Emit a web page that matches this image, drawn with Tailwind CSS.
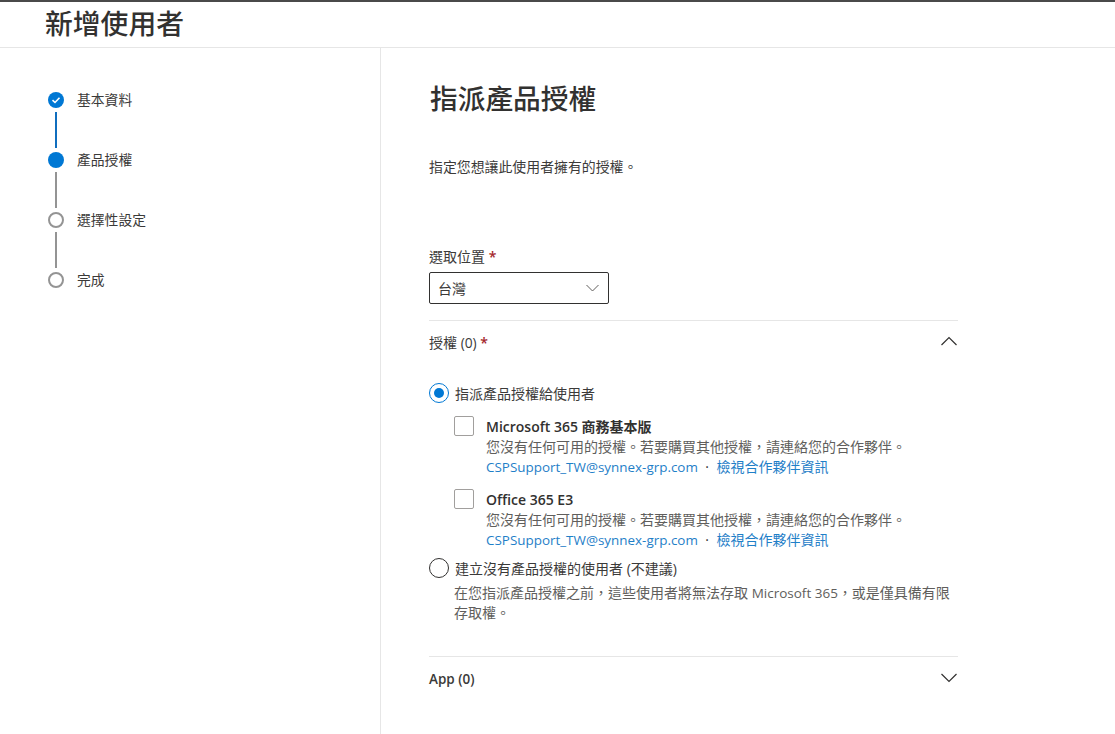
<!DOCTYPE html>
<html lang="zh-TW">
<head>
    <meta charset="UTF-8">
    <title>新增使用者</title>
    <script src="https://cdn.jsdelivr.net/npm/@tailwindcss/browser@4"></script>
</head>
<body class="bg-white h-[734px] overflow-hidden font-['Open_Sans','Noto_Sans_CJK_TC',sans-serif] text-[#3b3a39]">
    <!-- Header -->
    <div class="h-[48px] border-t-2 border-t-[#4a4a4a] border-b border-b-[#e6e6e6] pl-[45px]">
        <h1 class="text-[27.8px] leading-[42px] font-medium text-[#323130]">新增使用者</h1>
    </div>

    <div class="flex h-[686px]">
        <!-- Steps -->
        <div class="w-[381px] border-r border-[#e6e6e6] pt-[44px] pl-[48px] text-[13.8px]">
            <div class="flex items-center gap-[13px] h-[16px]">
                <div class="w-[16px] h-[16px] rounded-full bg-[#0078d4] flex items-center justify-center">
                    <svg width="10" height="10" viewBox="0 0 10 10" fill="none"><path d="M1.5 5.2 L4 7.5 L8.5 2.8" stroke="white" stroke-width="1.6"/></svg>
                </div>
                <span class="leading-none">基本資料</span>
            </div>
            <div class="w-[2px] h-[36px] bg-[#106ebe] ml-[7px] mt-[4px]"></div>
            <div class="flex items-center gap-[13px] h-[16px] mt-[4px]">
                <div class="w-[16px] h-[16px] rounded-full bg-[#0078d4]"></div>
                <span class="leading-none">產品授權</span>
            </div>
            <div class="w-[2px] h-[36px] bg-[#949494] ml-[7px] mt-[4px]"></div>
            <div class="flex items-center gap-[13px] h-[16px] mt-[4px]">
                <div class="w-[16px] h-[16px] rounded-full border-2 border-[#949494]"></div>
                <span class="leading-none">選擇性設定</span>
            </div>
            <div class="w-[2px] h-[36px] bg-[#949494] ml-[7px] mt-[4px]"></div>
            <div class="flex items-center gap-[13px] h-[16px] mt-[4px]">
                <div class="w-[16px] h-[16px] rounded-full border-2 border-[#949494]"></div>
                <span class="leading-none">完成</span>
            </div>
        </div>

        <!-- Main -->
        <div class="w-[577px] pl-[48px]">
            <h2 class="text-[27.7px] leading-[40px] font-medium mt-[30px] ml-[1px] text-[#323130]">指派產品授權</h2>
            <p class="text-[13.9px] leading-[20px] mt-[39px]">指定您想讓此使用者擁有的授權。</p>

            <div class="mt-[70px] text-[14px] leading-[20px]">選取位置 <span class="text-[#a4262c] font-semibold">*</span></div>
            <div class="mt-[5px] w-[180px] h-[32px] border border-[#323130] rounded-[2px] flex items-center justify-between pl-[8px] pr-[9px] text-[14px]">
                <span>台灣</span>
                <svg width="13" height="8" viewBox="0 0 13 8" fill="none"><path d="M0.5 1 L6.5 7 L12.5 1" stroke="#605e5c" stroke-width="1"/></svg>
            </div>

            <!-- Licenses section -->
            <div class="mt-[16px] border-t border-[#e6e6e6] h-[336px]">
                <div class="flex items-center justify-between h-[43px]">
                    <span class="text-[14px]">授權 <span class="text-[13.8px] font-medium">(0)</span> <span class="text-[#a4262c] font-semibold">*</span></span>
                    <svg width="16" height="10" viewBox="0 0 16 10" fill="none" class="mb-[3px] mr-[1px]"><path d="M0.5 9 L8 1.5 L15.5 9" stroke="#323130" stroke-width="1.2"/></svg>
                </div>

                <div class="flex items-center gap-[6px] mt-[18px] h-[22px]">
                    <div class="w-[20px] h-[20px] rounded-full border border-[#0078d4] flex items-center justify-center">
                        <div class="w-[10px] h-[10px] rounded-full bg-[#0078d4]"></div>
                    </div>
                    <span class="text-[14px]">指派產品授權給使用者</span>
                </div>

                <div class="flex mt-[12px] pl-[25px] gap-[12px]">
                    <div class="w-[20px] h-[20px] border border-[#a19f9d] rounded-[2px] shrink-0"></div>
                    <div class="text-[14px] leading-[20px] pt-[1px]">
                        <div class="font-semibold text-[#323130]">Microsoft 365 商務基本版</div>
                        <div class="text-[#605e5c]">您沒有任何可用的授權。若要購買其他授權，請連絡您的合作夥伴。</div>
                        <div class="text-[#1f80c8]"><span class="text-[13.43px]">CSPSupport_TW@synnex-grp.com</span><span class="text-[#323130] mx-[7.5px]">·</span>檢視合作夥伴資訊</div>
                    </div>
                </div>

                <div class="flex mt-[12px] pl-[25px] gap-[12px]">
                    <div class="w-[20px] h-[20px] border border-[#a19f9d] rounded-[2px] shrink-0"></div>
                    <div class="text-[14px] leading-[20px] pt-[1px]">
                        <div class="font-semibold text-[#323130]">Office 365 E3</div>
                        <div class="text-[#605e5c]">您沒有任何可用的授權。若要購買其他授權，請連絡您的合作夥伴。</div>
                        <div class="text-[#1f80c8]"><span class="text-[13.43px]">CSPSupport_TW@synnex-grp.com</span><span class="text-[#323130] mx-[7.5px]">·</span>檢視合作夥伴資訊</div>
                    </div>
                </div>

                <div class="flex items-center gap-[6px] mt-[7px] h-[22px]">
                    <div class="w-[20px] h-[20px] rounded-full border border-[#323130]"></div>
                    <span class="text-[14px]">建立沒有產品授權的使用者 (不建議)</span>
                </div>
                <p class="text-[14px] leading-[19px] text-[#605e5c] ml-[25px] mt-[4px] w-[500px]">在您指派產品授權之前，這些使用者將無法存取 <span class="text-[13.5px]">Microsoft 365</span>，或是僅具備有限<br>存取權。</p>
            </div>

            <!-- App section -->
            <div class="border-t border-[#e6e6e6] flex items-center justify-between h-[45px]">
                <span class="text-[13.5px] font-semibold">App (0)</span>
                <svg width="16" height="10" viewBox="0 0 16 10" fill="none" class="mb-[3px] mr-[1px]"><path d="M0.5 1 L8 8.5 L15.5 1" stroke="#323130" stroke-width="1.2"/></svg>
            </div>
        </div>
    </div>
</body>
</html>
